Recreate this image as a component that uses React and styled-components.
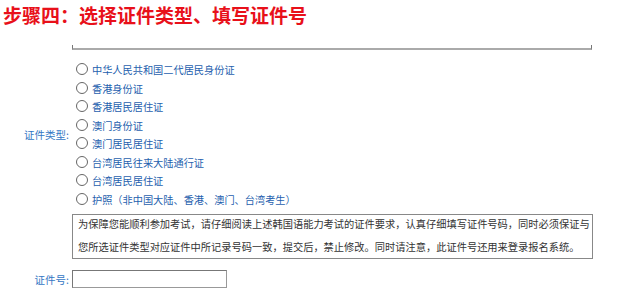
import React, { useState } from 'react'
import styled, { createGlobalStyle } from 'styled-components'

const GlobalStyle = createGlobalStyle`
  html, body {
    margin: 0;
    padding: 0;
    background: #fff;
  }
  body {
    font-family: "Noto Sans CJK SC", "Noto Sans", sans-serif;
  }
`

const types = [
  '中华人民共和国二代居民身份证',
  '香港身份证',
  '香港居民居住证',
  '澳门身份证',
  '澳门居民居住证',
  '台湾居民往来大陆通行证',
  '台湾居民居住证',
  '护照（非中国大陆、香港、澳门、台湾考生）',
]

export default function App() {
  const [picked, setPicked] = useState(null)
  const [number, setNumber] = useState('')

  return (
    <Page>
      <GlobalStyle />
      <Title>步骤四：选择证件类型、填写证件号</Title>
      <Frame />
      <Form>
        <Label>证件类型:</Label>
        <RadioList>
          {types.map((t, i) => (
            <Option key={t}>
              <Circle checked={picked === i} onClick={() => setPicked(i)} />
              <OptionText onClick={() => setPicked(i)}>{t}</OptionText>
            </Option>
          ))}
        </RadioList>

        <span />
        <Notice>
          <NoticeText>
            为保障您能顺利参加考试，请仔细阅读上述韩国语能力考试的证件要求，认真仔细填写证件号码，同时必须保证与
            <br />
            您所选证件类型对应证件中所记录号码一致，提交后，禁止修改。同时请注意，此证件号还用来登录报名系统。
          </NoticeText>
        </Notice>

        <Label>证件号:</Label>
        <NumberInput value={number} onChange={(e) => setNumber(e.target.value)} />
      </Form>
    </Page>
  )
}

const Page = styled.div`
  width: 639px;
  height: 300px;
  overflow: hidden;
`

const Title = styled.h2`
  margin: 0;
  padding: 2px 0 0 3px;
  height: 28px;
  font-size: 19px;
  line-height: 26px;
  font-weight: 700;
  color: #e8101a;
`

const Frame = styled.div`
  margin: 15px 0 0 72px;
  width: 518px;
  height: 3px;
  border-left: 1px solid #777;
  border-right: 1px solid #777;
  border-bottom: 2px solid #aaa;
`

const Form = styled.div`
  display: grid;
  grid-template-columns: 72px 521px;
  align-items: center;
  padding-top: 10.5px;
`

const Label = styled.span`
  justify-self: end;
  padding-right: 3px;
  font-size: 10.5px;
  color: #3477c4;
`

const RadioList = styled.div`
  display: flex;
  flex-direction: column;
  padding-left: 4px;
`

const Option = styled.label`
  display: flex;
  align-items: center;
  height: 18.5px;
  cursor: pointer;
`

const Circle = styled.span`
  box-sizing: border-box;
  width: 12px;
  height: 12px;
  border-radius: 50%;
  border: 1px solid #666;
  background: ${(p) => (p.checked ? 'radial-gradient(#333 0 2.5px, #fff 3px)' : '#fff')};
  margin-right: 4px;
  margin-top: -1px;
`

const OptionText = styled.span`
  font-size: 10.2px;
  color: #1f5fae;
  white-space: nowrap;
`

const Notice = styled.div`
  box-sizing: border-box;
  width: 521px;
  height: 45px;
  margin: 5.5px 0 11px;
  border: 1px solid #888;
  padding: 0 4px 0 5px;
  overflow: hidden;
`

const NoticeText = styled.p`
  margin: -3px 0 0;
  font-size: 10.24px;
  line-height: 23px;
  color: #333;
  white-space: nowrap;
`

const NumberInput = styled.input`
  box-sizing: border-box;
  width: 155px;
  height: 18px;
  border: 1px solid #999;
  border-top-color: #777;
  border-left-color: #777;
  padding: 0 3px;
  font-size: 11px;
  outline: none;
`
